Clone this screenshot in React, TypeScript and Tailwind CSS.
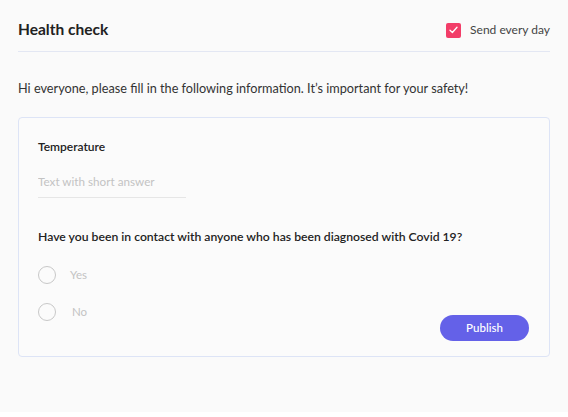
import React, { useState } from 'react';

export default function App() {
  const [daily, setDaily] = useState(true);
  const [answer, setAnswer] = useState<string | null>(null);

  return (
    <div
      className="w-[568px] h-[417px] bg-[#fafafa] flex flex-col text-[#2b2b2b]"
      style={{ fontFamily: 'Lato, "Noto Sans", sans-serif' }}
    >
      <div className="flex-1 px-[18px]">
        <div className="flex items-center justify-between h-[52px] pt-[9px] border-b border-[#e3e7f3]">
          <h1 className="text-[15.5px] font-bold text-[#222]">Health check</h1>
          <label className="flex items-center gap-[9px] cursor-pointer">
            <button
              onClick={() => setDaily(!daily)}
              className={`w-[15px] h-[15px] rounded-[2px] flex items-center justify-center ${daily ? 'bg-[#f23d68]' : 'border border-gray-300 bg-white'}`}
            >
              {daily && (
                <svg width="9" height="8" viewBox="0 0 9 8" fill="none">
                  <path d="M1 4.2L3.4 6.5L8 1.2" stroke="white" strokeWidth="1.3" strokeLinecap="round" strokeLinejoin="round" />
                </svg>
              )}
            </button>
            <span className="text-[12px] text-[#444]">Send every day</span>
          </label>
        </div>

        <p className="mt-[27px] text-[12.7px] text-[#333]">
          Hi everyone, please fill in the following information. It’s important for your safety!
        </p>

        <div className="mt-[19px] h-[240px] border border-[#dde4f6] rounded-[4px] bg-[#fbfbfb] pl-[19px] pr-[20px] pt-[20px] flex flex-col">
          <div className="text-[12px] font-semibold text-[#222]">Temperature</div>
          <input
            className="mt-[17px] w-[148px] pb-[6px] text-[11.7px] bg-transparent border-b border-[#e6e6e6] outline-none placeholder:text-[#c3c3c3]"
            placeholder="Text with short answer"
          />
          <div className="mt-[30px] text-[12.2px] font-semibold text-[#222]">
            Have you been in contact with anyone who has been diagnosed with Covid 19?
          </div>
          <div className="mt-[20px] flex flex-col gap-[19px]">
            {['Yes', 'No'].map((opt, i) => (
              <button
                key={opt}
                onClick={() => setAnswer(opt)}
                className="flex items-center text-left"
              >
                <span className="w-[18px] h-[18px] rounded-full border border-[#c8c8c8] flex items-center justify-center">
                  {answer === opt && <span className="w-[8px] h-[8px] rounded-full bg-[#6461e8]" />}
                </span>
                <span className={`text-[11.5px] text-[#c3c3c3] ${i === 0 ? 'ml-[14px]' : 'ml-[16px]'}`}>{opt}</span>
              </button>
            ))}
          </div>
          <div className="flex justify-end mt-[-6px]">
            <button className="w-[89px] h-[26px] rounded-full bg-[#6461e8] text-white text-[11.5px] font-medium">
              Publish
            </button>
          </div>
        </div>
      </div>
      <div className="h-[5px] bg-white" />
    </div>
  );
}
